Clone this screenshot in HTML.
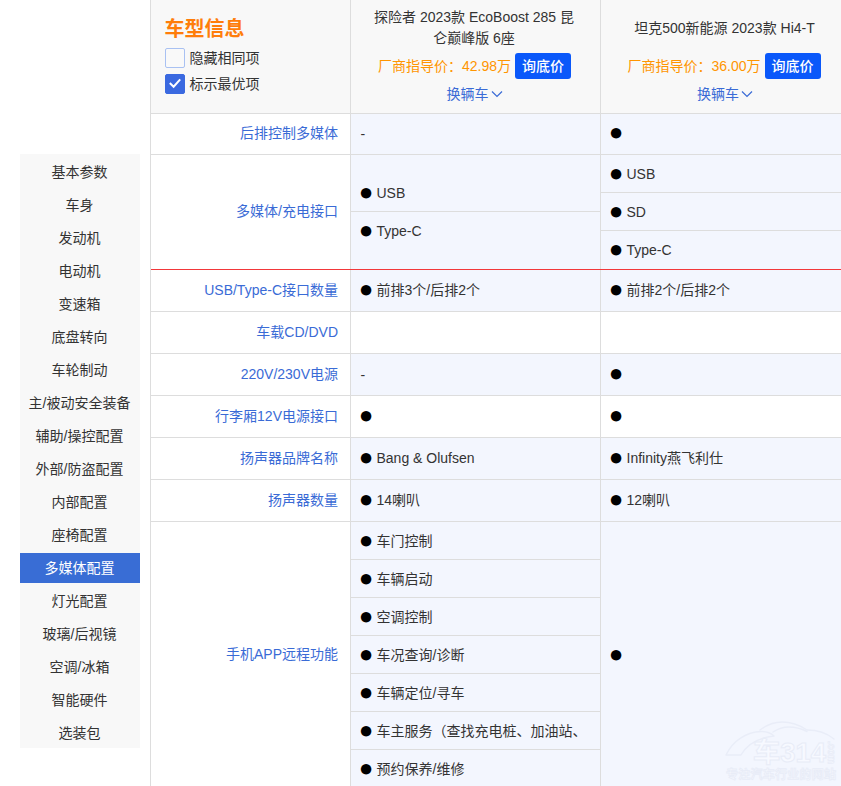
<!DOCTYPE html>
<html lang="zh-CN">
<head>
<meta charset="utf-8">
<title>车型参数对比</title>
<style>
*{box-sizing:border-box;margin:0;padding:0}
html,body{width:841px;height:786px;overflow:hidden;background:#fff}
body{position:relative;font-family:"Liberation Sans","Noto Sans CJK SC",sans-serif;font-size:14px;color:#333}
ul{list-style:none}

/* sidebar */
.side{position:absolute;left:20px;top:154px;width:120px;height:594px;background:#f8f8f8}
.side li{margin-top:3px;height:30px;line-height:30px;padding-right:1px;text-align:center;font-size:14px;color:#333}
.side li.on{background:#396dd5;color:#fff}

/* table */
.tb{position:absolute;left:150px;top:0;width:701px;height:800px;border-left:1px solid #ddd}
.row{position:absolute;left:0;width:700px;border-bottom:1px solid #ddd}
.c0,.c1,.c2{position:absolute;top:0;bottom:0}
.c0{left:0;width:200px;border-right:1px solid #ddd}
.c1{left:200px;width:250px;border-right:1px solid #ddd}
.c2{left:450px;width:250px}
.hl .c1,.hl .c2{background:#f3f6fe}

.head{top:0;height:114px;background:#f8f8f8}
.head h2{position:absolute;left:13.5px;top:16px;font-size:20px;line-height:26px;font-weight:bold;color:#ff7d0a}
.ck{position:absolute;left:14px;height:20px;line-height:20px;padding-left:24.5px;font-size:14px;color:#333;white-space:nowrap}
.ck i{position:absolute;left:0;top:0;width:20px;height:20px;border:1px solid #a9c1f2;border-radius:2px;background:#f9f9f9}
.ck i.on{border-color:#3a69e0;background:#3a69e0}
.ck svg{position:absolute;left:0;top:0}

.car{position:absolute;left:0;right:0;top:7px;height:42px;display:flex;align-items:center;justify-content:center;text-align:center;line-height:21px;padding:0 24px;color:#333}
.pr{position:absolute;left:0;right:2px;top:53px;height:26px;line-height:26px;text-align:center;white-space:nowrap;color:#ff9500}
.pr b{display:inline-block;vertical-align:top;width:56px;height:26px;margin-left:4px;border-radius:3px;background:#0a58fa;color:#fff;font-weight:500;font-size:14px;text-align:center}
.c2 .pr{right:4px}
.car{padding:0 26px 0 23px}
.chg{position:absolute;left:0;right:2px;top:84px;height:20px;line-height:20px;text-align:center;color:#3a6bd6}
.chg svg{vertical-align:middle;margin:-2px 0 0 2px}

.lab{position:absolute;left:0;right:0;padding-right:12px;text-align:right;line-height:20px;color:#3a6bd6;white-space:nowrap}
.v{position:absolute;left:0;right:0}
.it{height:38px;line-height:38px;padding-left:9.5px;white-space:nowrap;overflow:hidden;border-bottom:1px solid #ddd;color:#333}
.it:last-child{border-bottom:0}
.it.full{border-bottom:1px solid #ddd}
.ds{position:relative;top:1px}
.d{display:inline-block;width:17px;margin-left:-1px;font-family:"NanumGothic",sans-serif;font-size:14px;color:#000}
</style>
</head>
<body>

<ul class="side">
<li>基本参数</li><li>车身</li><li>发动机</li><li>电动机</li><li>变速箱</li><li>底盘转向</li><li>车轮制动</li><li>主/被动安全装备</li><li>辅助/操控配置</li><li>外部/防盗配置</li><li>内部配置</li><li>座椅配置</li><li class="on">多媒体配置</li><li>灯光配置</li><li>玻璃/后视镜</li><li>空调/冰箱</li><li>智能硬件</li><li>选装包</li>
</ul>

<div class="tb">
  <div class="row head">
    <div class="c0">
      <h2>车型信息</h2>
      <div class="ck" style="top:48px"><i></i>隐藏相同项</div>
      <div class="ck" style="top:74px"><i class="on"></i><svg width="20" height="20" viewBox="0 0 20 20"><path d="M4.8 9.1l3.8 3.6 6.6-7.4" fill="none" stroke="#fff" stroke-width="2"/></svg>标示最优项</div>
    </div>
    <div class="c1">
      <div class="car">探险者 2023款 EcoBoost 285 昆仑巅峰版 6座</div>
      <div class="pr">厂商指导价：42.98万<b>询底价</b></div>
      <div class="chg">换辆车<svg width="12" height="8" viewBox="0 0 12 8"><path d="M1 1.5l5 5 5-5" fill="none" stroke="#3a6bd6" stroke-width="1.2"/></svg></div>
    </div>
    <div class="c2">
      <div class="car">坦克500新能源 2023款 Hi4-T</div>
      <div class="pr">厂商指导价：36.00万<b>询底价</b></div>
      <div class="chg">换辆车<svg width="12" height="8" viewBox="0 0 12 8"><path d="M1 1.5l5 5 5-5" fill="none" stroke="#3a6bd6" stroke-width="1.2"/></svg></div>
    </div>
  </div>

  <div class="row hl" style="top:114px;height:41px">
    <div class="c0"><div class="lab" style="top:9px">后排控制多媒体</div></div>
    <div class="c1"><div class="v" style="top:0px"><div class="it"><span class="ds">-</span></div></div></div>
    <div class="c2"><div class="v" style="top:0px"><div class="it"><span class="d">●</span></div></div></div>
  </div>
  <div class="row hl" style="top:155px;height:115px;border-bottom-color:#f2373a">
    <div class="c0"><div class="lab" style="top:46px">多媒体/充电接口</div></div>
    <div class="c1"><div class="v" style="top:19px"><div class="it"><span class="d">●</span>USB</div><div class="it"><span class="d">●</span>Type-C</div></div></div>
    <div class="c2"><div class="v" style="top:0px"><div class="it"><span class="d">●</span>USB</div><div class="it"><span class="d">●</span>SD</div><div class="it"><span class="d">●</span>Type-C</div></div></div>
  </div>
  <div class="row hl" style="top:270px;height:42px">
    <div class="c0"><div class="lab" style="top:10px">USB/Type-C接口数量</div></div>
    <div class="c1"><div class="v" style="top:1px"><div class="it"><span class="d">●</span>前排3个/后排2个</div></div></div>
    <div class="c2"><div class="v" style="top:1px"><div class="it"><span class="d">●</span>前排2个/后排2个</div></div></div>
  </div>
  <div class="row" style="top:312px;height:42px">
    <div class="c0"><div class="lab" style="top:10px">车载CD/DVD</div></div>
    <div class="c1"></div>
    <div class="c2"></div>
  </div>
  <div class="row hl" style="top:354px;height:42px">
    <div class="c0"><div class="lab" style="top:10px">220V/230V电源</div></div>
    <div class="c1"><div class="v" style="top:1px"><div class="it"><span class="ds">-</span></div></div></div>
    <div class="c2"><div class="v" style="top:1px"><div class="it"><span class="d">●</span></div></div></div>
  </div>
  <div class="row" style="top:396px;height:42px">
    <div class="c0"><div class="lab" style="top:10px">行李厢12V电源接口</div></div>
    <div class="c1"><div class="v" style="top:1px"><div class="it"><span class="d">●</span></div></div></div>
    <div class="c2"><div class="v" style="top:1px"><div class="it"><span class="d">●</span></div></div></div>
  </div>
  <div class="row hl" style="top:438px;height:42px">
    <div class="c0"><div class="lab" style="top:10px">扬声器品牌名称</div></div>
    <div class="c1"><div class="v" style="top:1px"><div class="it"><span class="d">●</span>Bang &amp; Olufsen</div></div></div>
    <div class="c2"><div class="v" style="top:1px"><div class="it"><span class="d">●</span>Infinity燕飞利仕</div></div></div>
  </div>
  <div class="row hl" style="top:480px;height:42px">
    <div class="c0"><div class="lab" style="top:10px">扬声器数量</div></div>
    <div class="c1"><div class="v" style="top:1px"><div class="it"><span class="d">●</span>14喇叭</div></div></div>
    <div class="c2"><div class="v" style="top:1px"><div class="it"><span class="d">●</span>12喇叭</div></div></div>
  </div>
  <div class="row hl" style="top:522px;height:267px">
    <div class="c0"><div class="lab" style="top:122px">手机APP远程功能</div></div>
    <div class="c1"><div class="v" style="top:0px"><div class="it"><span class="d">●</span>车门控制</div><div class="it"><span class="d">●</span>车辆启动</div><div class="it"><span class="d">●</span>空调控制</div><div class="it"><span class="d">●</span>车况查询/诊断</div><div class="it"><span class="d">●</span>车辆定位/寻车</div><div class="it"><span class="d">●</span>车主服务（查找充电桩、加油站、</div><div class="it"><span class="d">●</span>预约保养/维修</div></div></div>
    <div class="c2"><div class="v" style="top:114px"><div class="it"><span class="d">●</span></div></div></div>
  </div>
</div>

<svg class="wm" width="120" height="66" viewBox="0 0 120 66" style="position:absolute;left:721px;top:718px">
  <g fill="none" stroke="#e9edf8" stroke-width="1.4" stroke-linecap="round" stroke-linejoin="round">
    <path d="M5 37 C12 22 26 14 40 13.5 C46 13.5 50 15 53 18 C36 20 26 26 20 37 Z"/>
    <path d="M39 12 C47 6 54 4 61 4 C72 4 80 8 86 12 C97 12 107 16 113 21"/>
    <path d="M52 14 C58 10 64 9 68 9 C75 9 81 11 86 13.5"/>
  </g>
  <text x="32" y="44" font-family="'Liberation Sans','Noto Sans CJK SC',sans-serif" font-size="27" font-weight="bold" fill="#f7f9ff" stroke="#e8ecf7" stroke-width="1" textLength="73" lengthAdjust="spacingAndGlyphs">车314</text>
  <text transform="translate(107,23) rotate(90)" font-family="'Liberation Sans',sans-serif" font-size="11" font-weight="bold" fill="#f7f9ff" stroke="#e8ecf7" stroke-width="0.8" textLength="23" lengthAdjust="spacingAndGlyphs">.com</text>
  <text x="5" y="61" font-family="'Liberation Sans','Noto Sans CJK SC',sans-serif" font-size="12" font-weight="bold" fill="#f6f8fe" stroke="#e8ecf7" stroke-width="0.8" textLength="110" lengthAdjust="spacing">专注汽车行业的网站</text>
</svg>

</body>
</html>
